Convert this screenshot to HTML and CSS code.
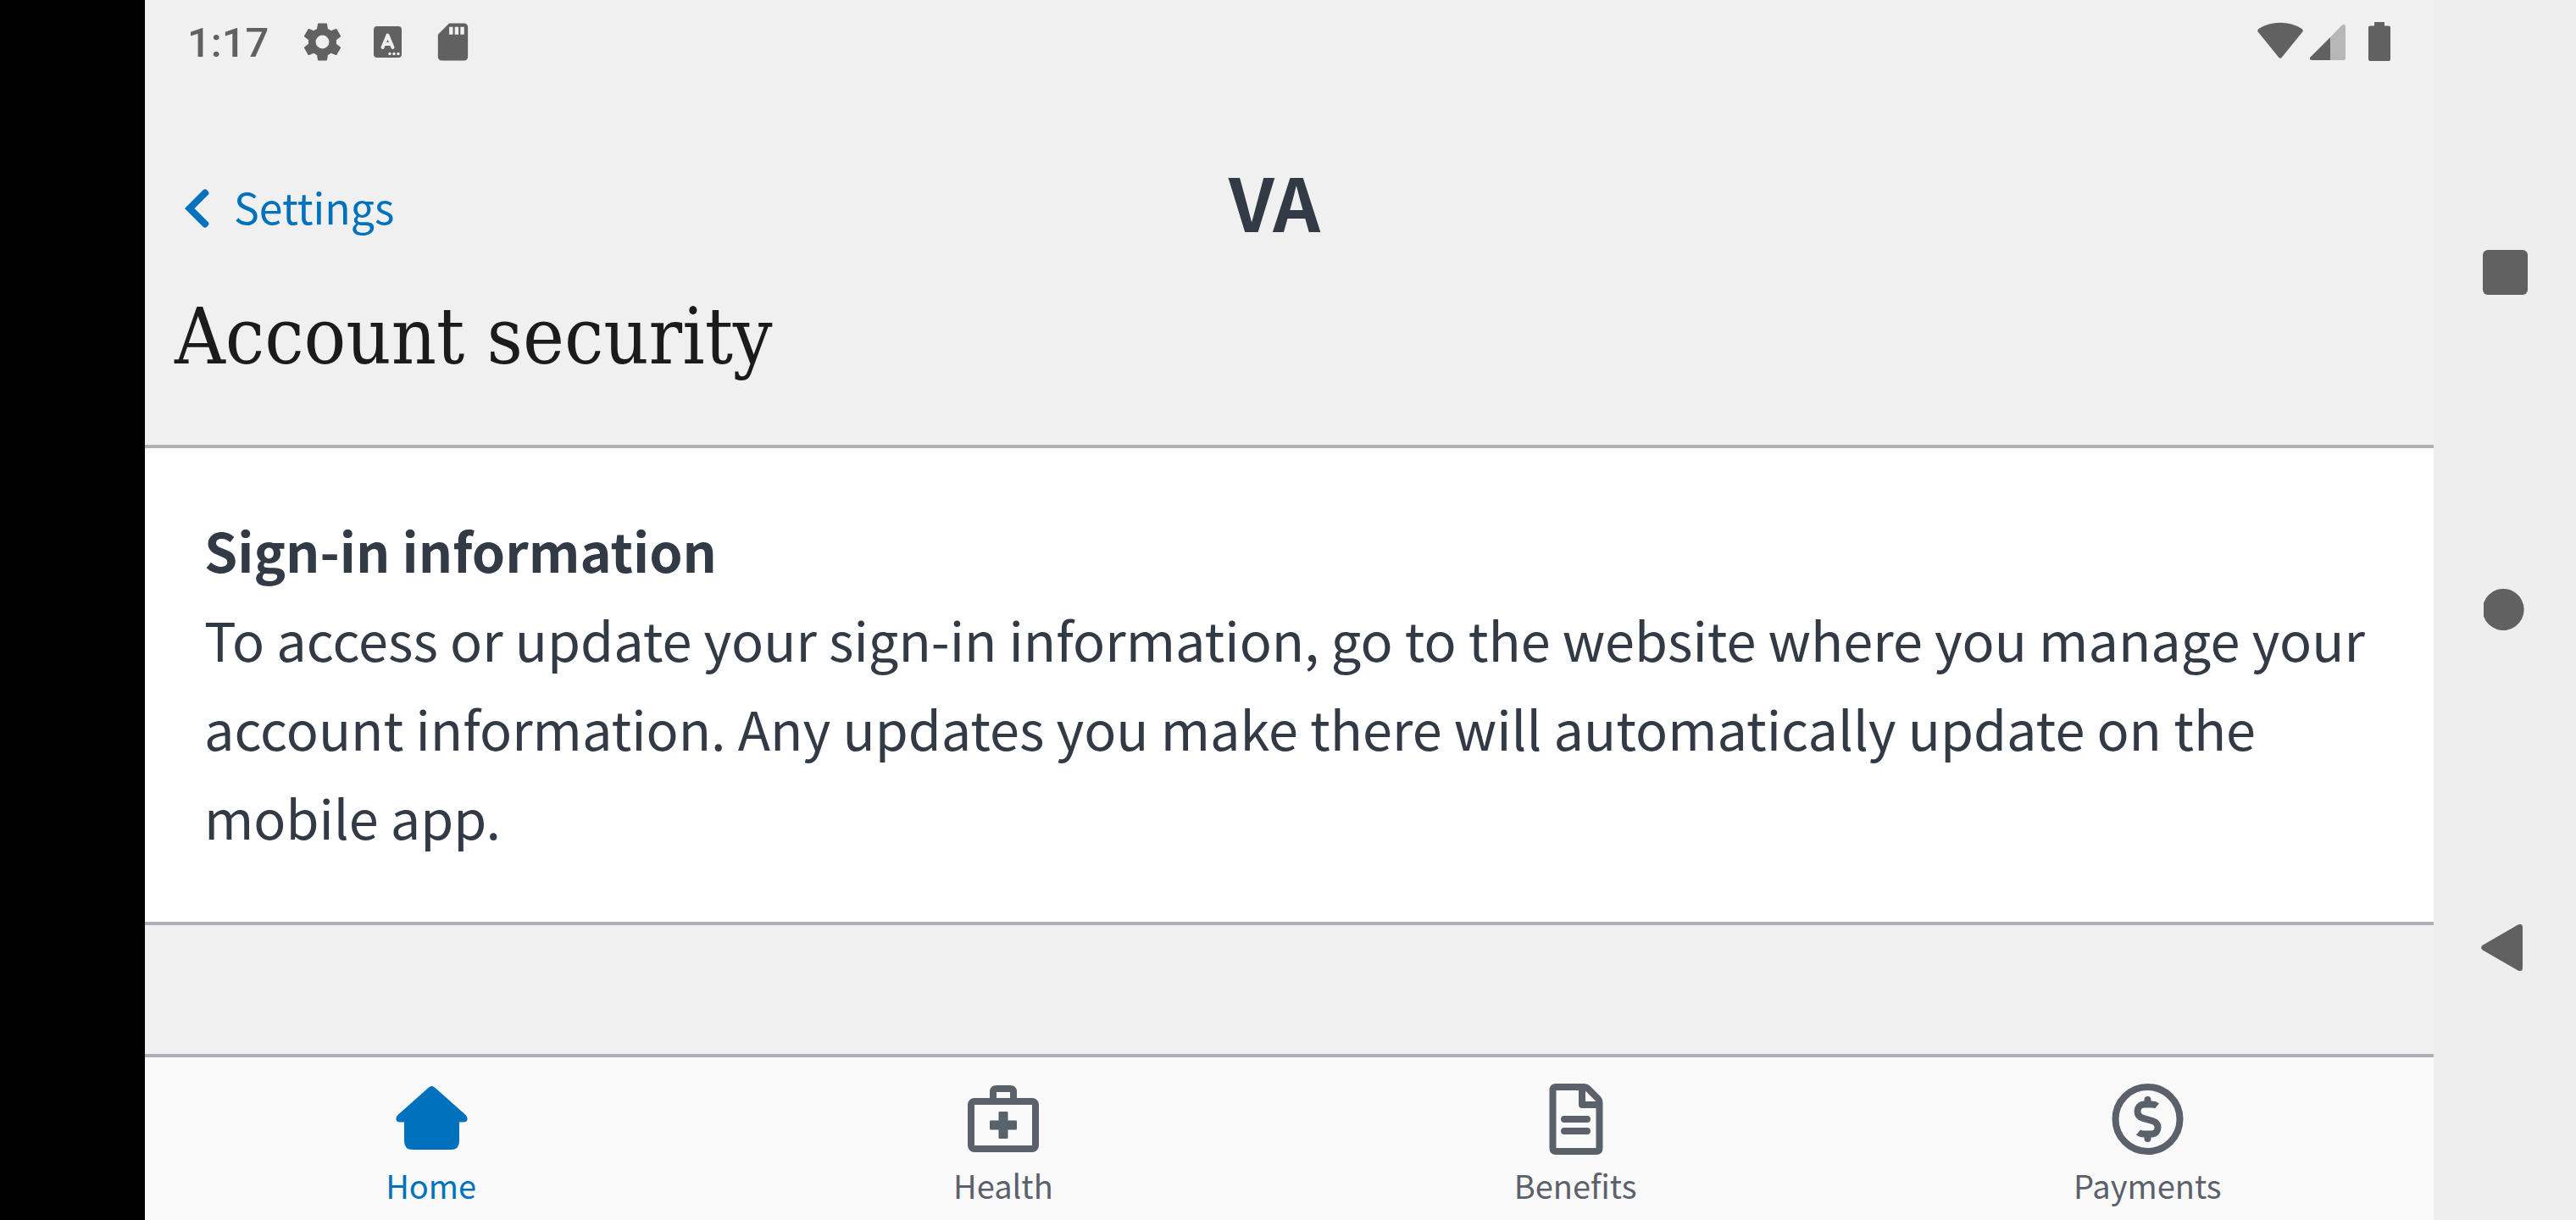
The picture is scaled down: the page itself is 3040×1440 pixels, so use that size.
FILE: index.html
```
<!DOCTYPE html>
<html lang="en">
<head>
<meta charset="utf-8">
<meta name="viewport" content="width=device-width, initial-scale=1">
<title>Account security</title>
<link rel="stylesheet" href="styles.css">
</head>
<body>
<div class="device">
  <div class="app">
    <div class="status">
      <time class="clock">1:17</time>
      <div class="notices">
        <svg class="notice" viewBox="0 0 24 24" aria-hidden="true"><path d="M19.4 13c0-.3.1-.6.1-1s0-.7-.1-1l2.200-1.700c.2-.1.200-.4.100-.6l-2-3.500c-.1-.2-.4-.3-.6-.2l-2.500 1c-.5-.4-1.100-.7-1.700-1l-.4-2.600c0-.2-.2-.4-.5-.4h-4c-.3 0-.5.2-.5.4l-.4 2.600c-.6.3-1.200.6-1.700 1l-2.500-1c-.2-.1-.5 0-.6.2l-2 3.500c-.1.2-.1.500.1.600L4.600 11c0 .3-.1.700-.1 1s0 .7.1 1l-2.200 1.700c-.2.1-.2.400-.1.600l2 3.500c.1.200.4.300.6.200l2.500-1c.5.4 1.100.7 1.700 1l.4 2.600c0 .2.200.4.500.4h4c.3 0 .5-.2.500-.4l.4-2.600c.6-.3 1.200-.6 1.700-1l2.500 1c.2.100.5 0 .6-.2l2-3.500c.1-.2.100-.5-.1-.6zM12 15.600a3.600 3.600 0 1 1 0-7.200 3.600 3.600 0 0 1 0 7.200z"/></svg>
        <svg class="notice" viewBox="0 0 53 53" aria-hidden="true"><rect x="10" y="8" width="33" height="37" rx="4"/><path class="cut" d="M20.500 33 26.500 18.500 32.500 33M22.500 29h8"/><g class="dots"><circle cx="29" cy="40.500" r="1.700"/><circle cx="34" cy="40.500" r="1.700"/><circle cx="39" cy="40.500" r="1.700"/></g></svg>
        <svg class="notice" viewBox="0 0 24 24" aria-hidden="true"><path d="M18 2h-8L4 8v12c0 1.100.9 2 2 2h12c1.100 0 2-.9 2-2V4c0-1.100-.9-2-2-2zm-6 6h-2V4h2zm3 0h-2V4h2zm3 0h-2V4h2z"/></svg>
      </div>
      <svg class="signals" viewBox="0 0 158 46" aria-hidden="true">
        <path d="M1.500 12.500Q-1 10 1.500 8Q13 .8 27 .8T52.500 8Q55 10 52.500 12.500L29 41.500Q27 44 25 41.500z"/>
        <path class="faint" d="M86 18 99.500 4Q103.500 1.500 104 5V43Q104 45 102 45H86z"/>
        <path d="M86 18V45H64.500Q60.500 44.500 62.500 41.500z"/>
        <path d="M138 0h12v4.500h5q2 0 2 2V44q0 2-2 2H133q-2 0-2-2V6.500q0-2 2-2h5z"/>
      </svg>
    </div>

    <header class="topbar">
      <a class="back" href="#settings">
        <svg class="chevron" viewBox="0 0 29 46" aria-hidden="true"><path d="M0 23 22 1Q24-.5 26 1L28 3.500Q29 5 28 6.500L11.500 23 28 39.500Q29 41 28 42.500L26 45Q24 46.500 22 45z"/></svg>
        <span class="back-label">Settings</span>
      </a>
      <div class="logo">VA</div>
    </header>

    <main class="content">
      <h1 class="title">Account security</h1>
      <section class="card">
        <h2 class="card-title">Sign-in information</h2>
        <p class="card-text">To access or update your sign-in information, go to the website where you manage your account information. Any updates you make there will automatically update on the mobile app.</p>
      </section>
    </main>

    <nav class="tabs" aria-label="Main">
      <a class="tab active" href="#home" aria-current="page">
        <svg class="tab-icon" viewBox="0 0 88 88" aria-hidden="true"><path d="M41 6.500Q44.500 3.500 48 6.500L84.500 39Q87 41.500 86.500 44.500Q86 47.500 82 47.500H77V70Q77 80 67 80H22Q12 80 12 70V47.500H7Q3 47.500 2.500 44.500Q2 41.500 4.500 39z"/></svg>
        <span>Home</span>
      </a>
      <a class="tab" href="#health">
        <svg class="tab-icon" viewBox="0 0 88 88" aria-hidden="true"><g class="line"><rect x="6" y="23" width="76" height="56" rx="4"/><path d="M32 23V12Q32 8 36 8H52Q56 8 56 12V23"/></g><path d="M39.500 35h9q1 0 1 1v9.500h9.500q1 0 1 1v9q0 1-1 1h-9.500V66q0 1-1 1h-9q-1 0-1-1v-9.500H29q-1 0-1-1v-9q0-1 1-1h9.500V36q0-1 1-1z"/></svg>
        <span>Health</span>
      </a>
      <a class="tab" href="#benefits">
        <svg class="tab-icon" viewBox="0 0 88 88" aria-hidden="true"><g class="line"><path d="M21 6H54.500Q57 6 58.500 7.500L71 20Q72.500 21.500 72.500 24V78Q72.500 82 68.500 82H21.500Q17.500 82 17.500 78V10Q17.500 6 21.500 6z"/><path d="M52 6V27H72"/><path class="round" d="M31 44H58M31 58H58"/></g></svg>
        <span>Benefits</span>
      </a>
      <a class="tab" href="#payments">
        <svg class="tab-icon" viewBox="0 0 88 88" aria-hidden="true"><g class="line"><circle cx="44.500" cy="44" r="38"/><path d="M44.500 24V21M44.500 64V67" class="round"/><path d="M55.500 28.500Q53 26.500 49 26.500H41C35 26.500 32.500 31 32.500 34.500C32.500 38 34 41.500 39 42.800L50 46C54.500 47.300 56.500 50 56.500 53.500C56.500 57 54.500 61.500 49 61.500H40Q36 61.500 33.500 59.500"/></g></svg>
        <span>Payments</span>
      </a>
    </nav>
  </div>

  <div class="system">
    <button class="key" type="button" aria-label="Overview"><svg class="key-icon" viewBox="0 0 56 56" aria-hidden="true"><rect x="2" y="2" width="53" height="53" rx="6"/></svg></button>
    <button class="key" type="button" aria-label="Home"><svg class="key-icon" viewBox="0 0 56 56" aria-hidden="true"><path d="M3 19.500A24.500 24.500 0 1 1 3 35.500z"/></svg></button>
    <button class="key" type="button" aria-label="Back"><svg class="key-icon" viewBox="0 0 56 56" aria-hidden="true"><path d="M2 24.500 43.500.500Q49-1.500 49 3.500V51.500Q49 56.500 43.500 54.500L2 30.500Q-2 27.500 2 24.500z"/></svg></button>
  </div>
</div>
</body>
</html>
```

FILE: styles.css
```
* {
  box-sizing: border-box;
}

body {
  margin: 0;
  background: #000;
  color: #323a45;
  font-family: "Noto Sans CJK JP", "Noto Sans", sans-serif;
}

h1, h2, p {
  margin: 0;
}

svg {
  display: block;
  flex: none;
  fill: currentColor;
}

/* The black strip on the left is the camera cutout */
.device {
  display: grid;
  grid-template-columns: minmax(0, 1fr) 168px;
  min-height: 100vh;
  padding-left: 171px;
}

.app {
  display: flex;
  flex-direction: column;
  background: #f0f0f0;
}

/* Status bar */
.status {
  display: flex;
  align-items: center;
  height: 98px;
  padding: 0 50px;
  color: #616161;
}

.clock {
  padding-top: 4px;
  font: 500 49px/56px Roboto, sans-serif;
}

.notices {
  display: flex;
  gap: 24px;
  margin-left: 37px;
}

.notice {
  width: 53px;
  height: 53px;
}

.cut {
  fill: none;
  stroke: #f0f0f0;
  stroke-width: 4;
  stroke-linecap: round;
  stroke-linejoin: round;
}

.dots {
  fill: #f0f0f0;
}

.signals {
  width: 158px;
  height: 46px;
  margin-left: auto;
}

.faint {
  opacity: 0.4;
}

/* Header */
.topbar {
  display: grid;
  grid-template-columns: 1fr auto 1fr;
  align-items: center;
  padding: 100px 82px 0 47px;
}

.back {
  display: flex;
  align-items: center;
  gap: 29px;
  color: #0071bc;
  font-size: 50px;
  line-height: 84px;
  text-decoration: none;
}

.back-label {
  padding-bottom: 6px;
}

.chevron {
  width: 29px;
  height: 46px;
}

.logo {
  padding-bottom: 20px;
  font-size: 87px;
  font-weight: 700;
  line-height: 76px;
}

/* Page content */
.content {
  flex: 1;
}

.title {
  padding: 56px 35px 79px;
  color: #1b1b1b;
  font-family: "DejaVu Serif Condensed", "DejaVu Serif", serif;
  font-size: 92px;
  font-weight: 400;
  line-height: 96px;
}

.card {
  padding: 67px 70px 72px;
  border-top: 4px solid #aeb0b5;
  border-bottom: 4px solid #aeb0b5;
  background: #fff;
  font-size: 63px;
  line-height: 105px;
}

.card-title {
  font-size: inherit;
  font-weight: 700;
}

/* Bottom tabs */
.tabs {
  display: grid;
  grid-template-columns: repeat(4, 1fr);
  border-top: 4px solid #aeb0b5;
  background: #f9f9f9;
}

.tab {
  display: flex;
  flex-direction: column;
  align-items: center;
  gap: 6px;
  padding: 29px 0 13px;
  color: #5b616b;
  font-size: 38px;
  line-height: 56px;
  text-decoration: none;
}

.tab.active {
  color: #0071bc;
}

.tab-icon {
  width: 88px;
  height: 88px;
}

.line {
  fill: none;
  stroke: currentColor;
  stroke-width: 8;
  stroke-linejoin: round;
}

.round {
  stroke-linecap: round;
}

/* System navigation */
.system {
  display: flex;
  flex-direction: column;
  padding: 121px 0;
  background: #eee;
}

.key {
  display: grid;
  flex: 1;
  place-items: center;
  padding: 0;
  border: 0;
  background: none;
  color: #616161;
}

.key-icon {
  width: 56px;
  height: 56px;
}
```
